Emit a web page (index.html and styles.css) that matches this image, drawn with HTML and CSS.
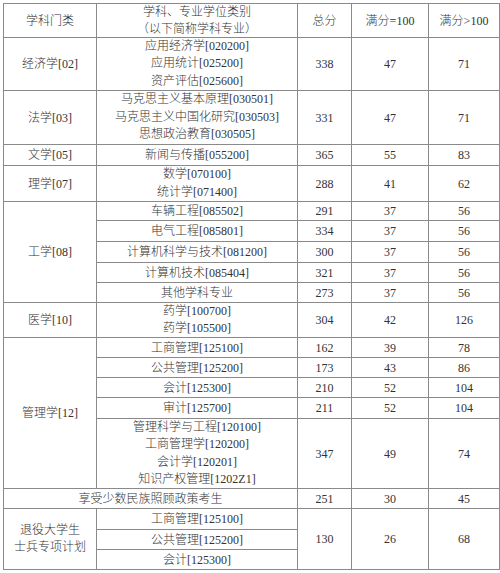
FILE: index.html
```html
<!DOCTYPE html>
<html lang="zh">
<head>
<meta charset="utf-8">
<title>分数线</title>
<link rel="stylesheet" href="styles.css">
</head>
<body>
<div class="wrap">
<table class="score">
  <colgroup>
    <col class="c1"><col class="c2"><col class="c3"><col class="c4"><col class="c5">
  </colgroup>
  <tr class="r34">
    <td>学科门类</td>
    <td><div class="stack hd"><div class="ln">学科、专业学位类别</div><div class="ln">（以下简称学科专业）</div></div></td>
    <td>总分</td>
    <td>满分=100</td>
    <td>满分&gt;100</td>
  </tr>
  <tr class="r53">
    <td>经济学[02]</td>
    <td><div class="stack"><div class="ln">应用经济学[020200]</div><div class="ln">应用统计[025200]</div><div class="ln">资产评估[025600]</div></div></td>
    <td>338</td><td>47</td><td>71</td>
  </tr>
  <tr class="r54">
    <td>法学[03]</td>
    <td><div class="stack"><div class="ln">马克思主义基本原理[030501]</div><div class="ln">马克思主义中国化研究[030503]</div><div class="ln">思想政治教育[030505]</div></div></td>
    <td>331</td><td>47</td><td>71</td>
  </tr>
  <tr class="r21">
    <td>文学[05]</td>
    <td>新闻与传播[055200]</td>
    <td>365</td><td>55</td><td>83</td>
  </tr>
  <tr class="r36">
    <td>理学[07]</td>
    <td><div class="stack"><div class="ln">数学[070100]</div><div class="ln">统计学[071400]</div></div></td>
    <td>288</td><td>41</td><td>62</td>
  </tr>
  <tr class="r19">
    <td rowspan="5">工学[08]</td>
    <td>车辆工程[085502]</td>
    <td>291</td><td>37</td><td>56</td>
  </tr>
  <tr class="r21">
    <td>电气工程[085801]</td>
    <td>334</td><td>37</td><td>56</td>
  </tr>
  <tr class="r21">
    <td>计算机科学与技术[081200]</td>
    <td>300</td><td>37</td><td>56</td>
  </tr>
  <tr class="r20">
    <td>计算机技术[085404]</td>
    <td>321</td><td>37</td><td>56</td>
  </tr>
  <tr class="r20">
    <td>其他学科专业</td>
    <td>273</td><td>37</td><td>56</td>
  </tr>
  <tr class="r35">
    <td>医学[10]</td>
    <td><div class="stack"><div class="ln">药学[100700]</div><div class="ln">药学[105500]</div></div></td>
    <td>304</td><td>42</td><td>126</td>
  </tr>
  <tr class="r20">
    <td rowspan="5">管理学[12]</td>
    <td>工商管理[125100]</td>
    <td>162</td><td>39</td><td>78</td>
  </tr>
  <tr class="r20">
    <td>公共管理[125200]</td>
    <td>173</td><td>43</td><td>86</td>
  </tr>
  <tr class="r20">
    <td>会计[125300]</td>
    <td>210</td><td>52</td><td>104</td>
  </tr>
  <tr class="r21">
    <td>审计[125700]</td>
    <td>211</td><td>52</td><td>104</td>
  </tr>
  <tr class="r70">
    <td><div class="stack"><div class="ln">管理科学与工程[120100]</div><div class="ln">工商管理学[120200]</div><div class="ln">会计学[120201]</div><div class="ln">知识产权管理[1202Z1]</div></div></td>
    <td>347</td><td>49</td><td>74</td>
  </tr>
  <tr class="r20">
    <td colspan="2">享受少数民族照顾政策考生</td>
    <td>251</td><td>30</td><td>45</td>
  </tr>
  <tr class="r21">
    <td rowspan="3"><div class="stack"><div class="ln">退役大学生</div><div class="ln">士兵专项计划</div></div></td>
    <td>工商管理[125100]</td>
    <td rowspan="3">130</td><td rowspan="3">26</td><td rowspan="3">68</td>
  </tr>
  <tr class="r20">
    <td>公共管理[125200]</td>
  </tr>
  <tr class="r20">
    <td>会计[125300]</td>
  </tr>
</table>
</div>
</body>
</html>
```
FILE: styles.css
```css
html, body {
  margin: 0;
  padding: 0;
  background: #ffffff;
}
.wrap {
  padding: 3px 0 0 3px;
}
.score {
  border-collapse: collapse;
  table-layout: fixed;
  width: 496px;
  font-family: "Liberation Serif", "Noto Sans CJK SC", serif;
  font-size: 12px;
  font-weight: 300;
  line-height: 16px;
  color: #333333;
}
.c1 { width: 93px; }
.c2 { width: 201px; }
.c3 { width: 54px; }
.c4 { width: 77px; }
.c5 { width: 71px; }
.score td {
  border: 1px solid #8a8a8a;
  padding: 0;
  text-align: center;
  vertical-align: middle;
  white-space: nowrap;
}
.stack {
  height: 16px;
  display: flex;
  flex-direction: column;
  justify-content: center;
  align-items: center;
}
.ln {
  flex: none;
  height: 17.5px;
  line-height: 17.5px;
}
.hd .ln {
  height: 17px;
  line-height: 17px;
}
.r19 { height: 19px; }
.r20 { height: 20px; }
.r21 { height: 21px; }
.r34 { height: 34px; }
.r35 { height: 35px; }
.r36 { height: 36px; }
.r53 { height: 53px; }
.r54 { height: 54px; }
.r70 { height: 70px; }
```
